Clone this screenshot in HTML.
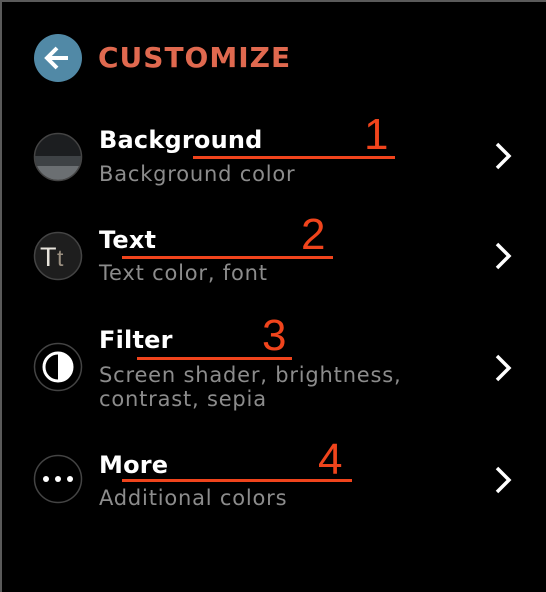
<!DOCTYPE html>
<html><head><meta charset="utf-8"><style>
html,body{margin:0;padding:0;background:#000;}
body{width:546px;height:592px;position:relative;overflow:hidden;font-family:"DejaVu Sans","Liberation Sans",sans-serif;}
.b{position:absolute;background:#5a5a5a;}
.t{position:absolute;left:99px;color:#fff;font-weight:bold;font-size:24px;line-height:28px;letter-spacing:0.2px;}
.s{position:absolute;left:99px;color:#8c8c8c;font-size:21px;line-height:23px;letter-spacing:0.8px;}
.r{position:absolute;height:3px;background:#f0441c;}
.n{position:absolute;color:#f0441c;font-size:44px;line-height:40px;font-family:"Liberation Sans",sans-serif;}
svg{position:absolute;}
</style></head><body>
<div class="b" style="left:0;top:0;width:546px;height:2px"></div>
<div class="b" style="left:0;top:0;width:2px;height:592px"></div>

<svg style="left:34px;top:34px" width="48" height="48" viewBox="0 0 48 48">
<circle cx="24" cy="24" r="24" fill="#5189a6"/>
<path d="M34 24H14M23 14L13 24L23 34" stroke="#fff" stroke-width="4" fill="none"/>
</svg>
<div style="position:absolute;left:98px;top:41px;color:#e0694f;font-weight:bold;font-size:28px;line-height:34px;letter-spacing:1px">CUSTOMIZE</div>

<svg style="left:33px;top:132px" width="50" height="50" viewBox="0 0 50 50">
<defs><clipPath id="c"><circle cx="25" cy="25" r="23"/></clipPath></defs>
<g clip-path="url(#c)"><rect width="50" height="24" fill="#1c1e20"/><rect y="24" width="50" height="10" fill="#3e4245"/><rect y="34" width="50" height="16" fill="#6b6f72"/></g>
<circle cx="25" cy="25" r="23.5" stroke="#444" stroke-width="1.5" fill="none"/>
</svg>
<div class="t" style="top:126px">Background</div>
<div class="s" style="top:163px">Background color</div>

<svg style="left:33px;top:231px" width="50" height="50" viewBox="0 0 50 50">
<circle cx="25" cy="25" r="23.5" fill="#1e1e1e" stroke="#444" stroke-width="1.5"/>
<text x="7" y="35" font-family="Liberation Sans" font-size="27" fill="#e8e4dc">T</text>
<text x="24" y="35" font-family="Liberation Sans" font-size="23" fill="#9a8f80">t</text>
</svg>
<div class="t" style="top:226px">Text</div>
<div class="s" style="top:262px">Text color, font</div>

<svg style="left:33px;top:342px" width="50" height="50" viewBox="0 0 50 50">
<circle cx="25" cy="25" r="23.5" fill="#000" stroke="#444" stroke-width="1.5"/>
<circle cx="25" cy="25" r="14" fill="none" stroke="#fff" stroke-width="3"/>
<path d="M25 11A14 14 0 0 1 25 39Z" fill="#fff"/>
</svg>
<div class="t" style="top:326px">Filter</div>
<div class="s" style="top:363px;line-height:24px">Screen shader, brightness,<br>contrast, sepia</div>

<svg style="left:33px;top:454px" width="50" height="50" viewBox="0 0 50 50">
<circle cx="25" cy="25" r="23.5" fill="#000" stroke="#444" stroke-width="1.5"/>
<circle cx="13" cy="25" r="3" fill="#fff"/><circle cx="25" cy="25" r="3" fill="#fff"/><circle cx="37" cy="25" r="3" fill="#fff"/>
</svg>
<div class="t" style="top:451px">More</div>
<div class="s" style="top:487px">Additional colors</div>

<svg style="left:493px;top:142px" width="20" height="30"><path d="M4 2L16 14L4 26" stroke="#fff" stroke-width="3.5" fill="none"/></svg>
<svg style="left:493px;top:242px" width="20" height="30"><path d="M4 2L16 14L4 26" stroke="#fff" stroke-width="3.5" fill="none"/></svg>
<svg style="left:493px;top:354px" width="20" height="30"><path d="M4 2L16 14L4 26" stroke="#fff" stroke-width="3.5" fill="none"/></svg>
<svg style="left:493px;top:466px" width="20" height="30"><path d="M4 2L16 14L4 26" stroke="#fff" stroke-width="3.5" fill="none"/></svg>

<div class="r" style="left:193px;top:156px;width:202px"></div>
<div class="n" style="left:364px;top:115px">1</div>
<div class="r" style="left:122px;top:256px;width:211px"></div>
<div class="n" style="left:301px;top:215px">2</div>
<div class="r" style="left:137px;top:357px;width:155px"></div>
<div class="n" style="left:262px;top:316px">3</div>
<div class="r" style="left:122px;top:479px;width:230px"></div>
<div class="n" style="left:318px;top:440px">4</div>
</body></html>
